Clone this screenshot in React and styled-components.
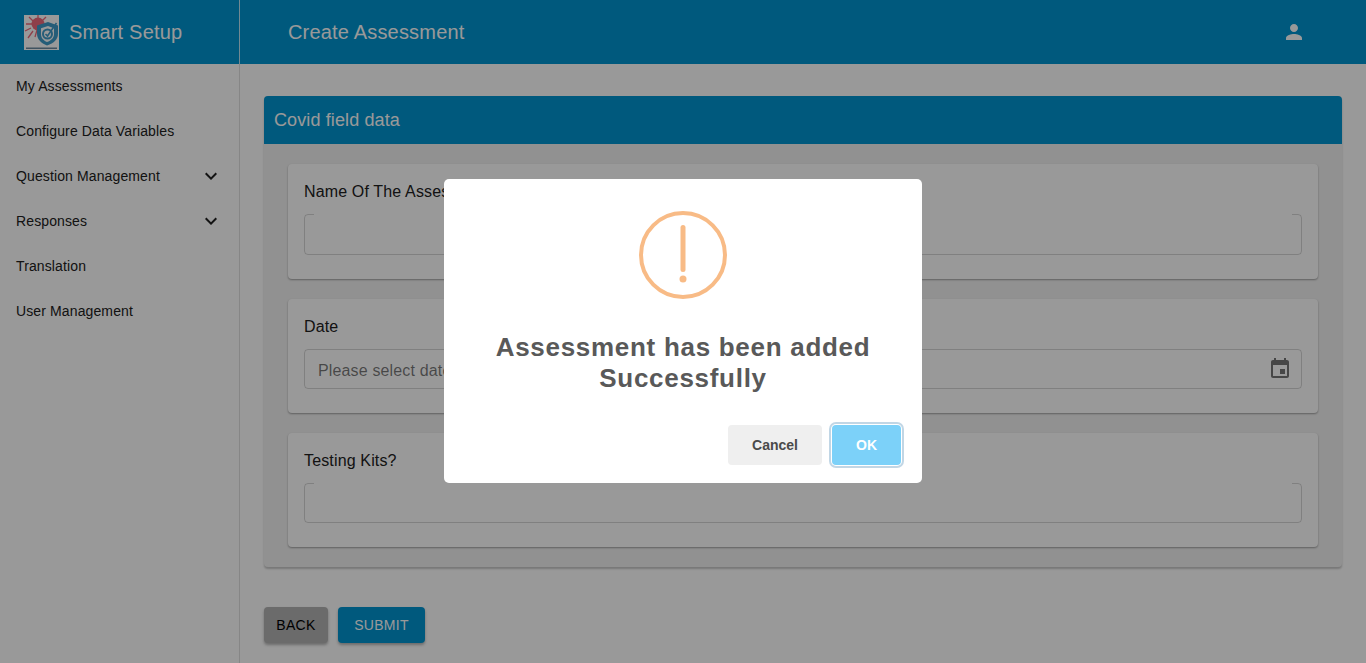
import React from 'react';
import styled, { createGlobalStyle } from 'styled-components';

const GlobalStyle = createGlobalStyle`
  html, body {
    margin: 0;
    padding: 0;
    height: 100%;
    overflow: hidden;
    background: #fff;
    font-family: "Liberation Sans", Arial, sans-serif;
  }
  * {
    box-sizing: border-box;
  }
`;

const Page = styled.div`
  display: flex;
  flex-direction: column;
  height: 663px;
`;

const Header = styled.header`
  display: flex;
  align-items: center;
  flex: 0 0 64px;
  background: #0094d0;
  color: #fff;
`;

const Brand = styled.div`
  display: flex;
  align-items: center;
  gap: 10px;
  width: 240px;
  height: 64px;
  padding-left: 24px;
  font-size: 20px;
  letter-spacing: 0.2px;
  border-right: 1px solid rgba(255, 255, 255, 0.75);
`;

const PageTitle = styled.h1`
  flex: 1;
  margin: 0;
  padding-left: 48px;
  font-size: 20px;
  font-weight: 400;
  letter-spacing: 0.18px;
`;

const UserButton = styled.div`
  display: flex;
  width: 24px;
  height: 24px;
  margin-right: 60px;
`;

const Body = styled.div`
  display: flex;
  flex: 1;
  min-height: 0;
`;

const Sidebar = styled.nav`
  flex: 0 0 240px;
  border-right: 1px solid rgba(0, 0, 0, 0.12);
`;

const NavItem = styled.div`
  display: flex;
  align-items: center;
  justify-content: space-between;
  height: 45px;
  padding: 0 16px 2px;
  font-size: 14px;
  letter-spacing: 0.12px;
  color: #212121;
`;

const Main = styled.main`
  flex: 1;
  padding: 32px 24px 0;
`;

const Panel = styled.section`
  border-radius: 4px;
  background: #f2f2f2;
  box-shadow: 0 2px 2px rgba(0, 0, 0, 0.22);
`;

const PanelHeader = styled.h2`
  display: flex;
  align-items: center;
  height: 48px;
  margin: 0;
  padding: 0 10px;
  border-radius: 4px 4px 0 0;
  background: #0094d0;
  color: #fff;
  font-size: 18px;
  font-weight: 400;
  letter-spacing: 0.12px;
`;

const PanelBody = styled.div`
  display: flex;
  flex-direction: column;
  gap: 20px;
  padding: 20px 24px;
`;

const Card = styled.div`
  display: flex;
  flex-direction: column;
  height: ${(p) => p.$height}px;
  padding: 18px 16px 0;
  border-radius: 4px;
  background: #fff;
  box-shadow: 0 1px 2px rgba(0, 0, 0, 0.35);
`;

const Label = styled.label`
  height: 24px;
  margin-bottom: 8px;
  font-size: 16px;
  line-height: 20px;
  letter-spacing: 0.15px;
  color: #212121;
`;

const InputBox = styled.div`
  position: relative;
  display: flex;
  align-items: center;
  height: ${(p) => p.$height}px;
  padding: 0 9px 0 13px;
  border: 1px solid rgba(0, 0, 0, 0.16);
  border-radius: 4px;

  ${(p) => p.$notched && `
    &::before {
      content: '';
      position: absolute;
      top: -1px;
      left: 9px;
      right: 9px;
      height: 1px;
      background: #fff;
    }
  `}
`;

const TextInput = styled.input`
  flex: 1;
  min-width: 0;
  border: 0;
  outline: 0;
  padding: 3px 0 0;
  background: transparent;
  font-family: inherit;
  font-size: 16px;
  letter-spacing: 0.15px;

  &::placeholder {
    color: rgba(0, 0, 0, 0.54);
    opacity: 1;
  }
`;

const Actions = styled.div`
  display: flex;
  gap: 10px;
  margin-top: 40px;
`;

const ActionButton = styled.button`
  width: ${(p) => p.$width}px;
  height: 36px;
  padding: 0;
  border: 0;
  border-radius: 4px;
  background: ${(p) => p.$bg};
  color: ${(p) => p.$color};
  font-family: inherit;
  font-size: 14px;
  letter-spacing: 0.3px;
  box-shadow: 0 2px 3px rgba(0, 0, 0, 0.3);
`;

const Overlay = styled.div`
  position: fixed;
  inset: 0;
  display: flex;
  align-items: flex-start;
  justify-content: center;
  padding-top: 179px;
  background: rgba(0, 0, 0, 0.4);
`;

const Modal = styled.div`
  display: flex;
  flex-direction: column;
  align-items: center;
  width: 478px;
  height: 304px;
  padding-top: 32px;
  border-radius: 5px;
  background: #fff;
`;

const AlertIcon = styled.svg`
  display: block;
  width: 88px;
  height: 88px;
`;

const ModalTitle = styled.h2`
  width: 400px;
  margin: 33px 0 0;
  font-size: 26px;
  line-height: 31px;
  font-weight: 700;
  letter-spacing: 0.71px;
  text-align: center;
  color: #595959;
`;

const ModalActions = styled.div`
  display: flex;
  align-self: flex-end;
  gap: 10px;
  margin: 31px 21px 0 0;
`;

const ModalButton = styled.button`
  width: ${(p) => p.$width}px;
  height: 40px;
  padding: 0;
  border: 0;
  border-radius: 4px;
  background: ${(p) => p.$bg};
  color: ${(p) => p.$color};
  font-family: inherit;
  font-size: 14px;
  font-weight: 700;
  box-shadow: ${(p) => (p.$focused ? '0 0 0 1px #fff, 0 0 0 3px rgba(43, 114, 165, 0.29)' : 'none')};
`;

const MuiIcon = ({ path, color, size = 24 }) => (
  <svg width={size} height={size} viewBox="0 0 24 24" fill={color}>
    <path d={path} />
  </svg>
);

const ICON_CHEVRON = 'M16.59 8.59L12 13.17 7.41 8.59 6 10l6 6 6-6z';
const ICON_PERSON = 'M12 12c2.21 0 4-1.79 4-4s-1.79-4-4-4-4 1.79-4 4 1.79 4 4 4zm0 2c-2.67 0-8 1.34-8 4v2h16v-2c0-2.66-5.33-4-8-4z';
const ICON_EVENT = 'M17 12h-5v5h5v-5zM16 1v2H8V1H6v2H5c-1.11 0-1.99.9-1.99 2L3 19c0 1.1.89 2 2 2h14c1.1 0 2-.9 2-2V5c0-1.1-.9-2-2-2h-1V1h-2zm3 18H5V8h14v11z';

const Logo = () => (
  <svg width="35" height="35" viewBox="0 0 35 35">
    <rect width="35" height="35" fill="#fff" />
    <g stroke="#ee6a7c" strokeWidth="1.3">
      <path d="M14 0v6M5 2l4 4M22 2l-4 4M2 9h6M1 16l6-3M4 23l5-7M11 22l2-7" />
    </g>
    <circle cx="14" cy="9" r="6.500" fill="#ee6a7c" />
    <path d="M24 7l10 3.500v8c0 6-4 9.500-11 12-6-2.500-10-6-10-12v-8z" fill="#3f9bc8" />
    <path d="M24 11l6 2.200v5.800c0 4-3 6.500-7 8-3.500-1.500-6-4-6-8v-5.800z" fill="#fff" />
    <circle cx="23.500" cy="19" r="4.500" fill="none" stroke="#3f9bc8" strokeWidth="2" />
    <path d="M21.500 19l2 2 9-13" fill="none" stroke="#3f9bc8" strokeWidth="1.600" />
    <rect x="2" y="32.500" width="31" height="1.500" fill="#6b8aa0" />
  </svg>
);

const navItems = [
  { label: 'My Assessments' },
  { label: 'Configure Data Variables' },
  { label: 'Question Management', expandable: true },
  { label: 'Responses', expandable: true },
  { label: 'Translation' },
  { label: 'User Management' },
];

const App = () => (
  <Page>
    <GlobalStyle />
    <Header>
      <Brand>
        <Logo />
        Smart Setup
      </Brand>
      <PageTitle>Create Assessment</PageTitle>
      <UserButton>
        <MuiIcon path={ICON_PERSON} color="#fff" />
      </UserButton>
    </Header>
    <Body>
      <Sidebar>
        {navItems.map((item) => (
          <NavItem key={item.label}>
            {item.label}
            {item.expandable && <MuiIcon path={ICON_CHEVRON} color="#212121" />}
          </NavItem>
        ))}
      </Sidebar>
      <Main>
        <Panel>
          <PanelHeader>Covid field data</PanelHeader>
          <PanelBody>
            <Card $height={115}>
              <Label>Name Of The Assessment</Label>
              <InputBox $height={41} $notched>
                <TextInput />
              </InputBox>
            </Card>
            <Card $height={114}>
              <Label>Date</Label>
              <InputBox $height={40}>
                <TextInput placeholder="Please select date" />
                <MuiIcon path={ICON_EVENT} color="rgba(0, 0, 0, 0.54)" />
              </InputBox>
            </Card>
            <Card $height={114}>
              <Label>Testing Kits?</Label>
              <InputBox $height={40} $notched>
                <TextInput />
              </InputBox>
            </Card>
          </PanelBody>
        </Panel>
        <Actions>
          <ActionButton $width={64} $bg="#b2b2b2" $color="#000">BACK</ActionButton>
          <ActionButton $width={87} $bg="#0094d0" $color="#fff">SUBMIT</ActionButton>
        </Actions>
      </Main>
    </Body>
    <Overlay>
      <Modal>
        <AlertIcon viewBox="0 0 88 88">
          <circle cx="44" cy="44" r="42" fill="none" stroke="#f8bb86" strokeWidth="4" />
          <rect x="41.500" y="14" width="5" height="47" rx="2.500" fill="#f8bb86" />
          <circle cx="44" cy="68" r="3.500" fill="#f8bb86" />
        </AlertIcon>
        <ModalTitle>Assessment has been added Successfully</ModalTitle>
        <ModalActions>
          <ModalButton $width={94} $bg="#efefef" $color="#4a4a4a">Cancel</ModalButton>
          <ModalButton $width={69} $bg="#7cd1f9" $color="#fff" $focused>OK</ModalButton>
        </ModalActions>
      </Modal>
    </Overlay>
  </Page>
);

export default App;
